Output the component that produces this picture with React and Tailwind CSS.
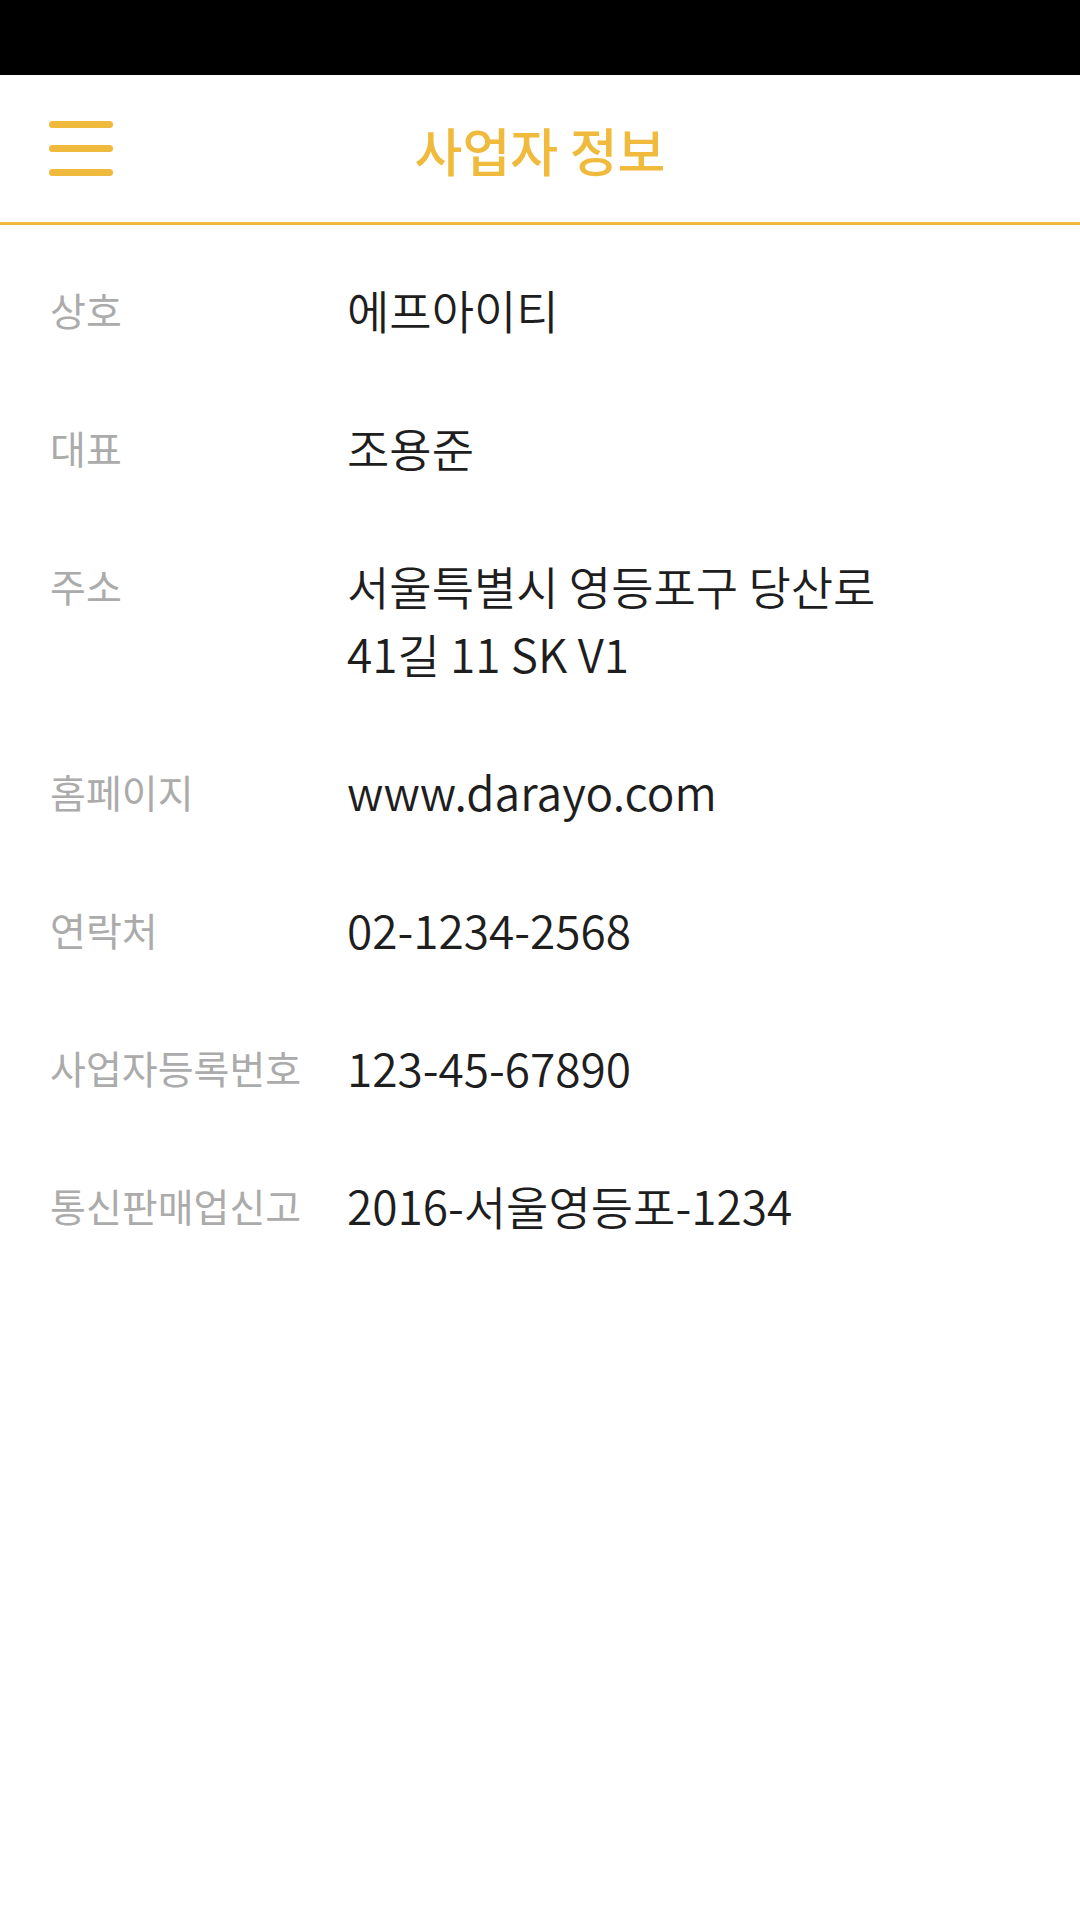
import React from "react";

const rows = [
  { label: "상호", value: ["에프아이티"] },
  { label: "대표", value: ["조용준"] },
  { label: "주소", value: ["서울특별시 영등포구 당산로", "41길 11 SK V1"] },
  { label: "홈페이지", value: ["www.darayo.com"] },
  { label: "연락처", value: ["02-1234-2568"] },
  { label: "사업자등록번호", value: ["123-45-67890"] },
  { label: "통신판매업신고", value: ["2016-서울영등포-1234"] },
];

const App = () => {
  return (
    <div
      className="w-[1080px] min-h-[1920px] bg-white"
      style={{ fontFamily: '"Noto Sans CJK KR", "Noto Sans", sans-serif' }}
    >
      <div className="h-[75px] bg-black" />

      <header className="relative h-[150px] flex items-center justify-center border-b-[3px] border-[#f0ba3c]">
        <button className="absolute left-[49px] top-[46px] flex flex-col gap-[17px]">
          <span className="block w-[64px] h-[7px] rounded-full bg-[#f0ba3c]" />
          <span className="block w-[64px] h-[7px] rounded-full bg-[#f0ba3c]" />
          <span className="block w-[64px] h-[7px] rounded-full bg-[#f0ba3c]" />
        </button>
        <h1 className="text-[52px] font-medium leading-none text-[#f0ba3c] pt-[2px]">사업자 정보</h1>
      </header>

      <div className="pt-[15px] px-[50px]">
        {rows.map((row, i) => (
          <div key={i} className="flex py-[35px]">
            <div className="w-[297px] shrink-0 text-[39px] font-normal leading-[68px] text-[#ababab]">
              {row.label}
            </div>
            <div className="text-[46px] font-[350] leading-[68px] text-[#1e1e1e]">
              {row.value.map((line, j) => (
                <div key={j}>{line}</div>
              ))}
            </div>
          </div>
        ))}
      </div>
    </div>
  );
};

export default App;
